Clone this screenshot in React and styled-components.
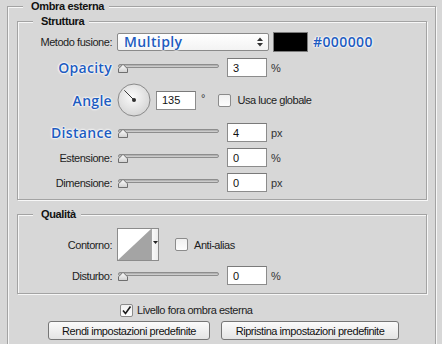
import React from 'react';
import styled, { createGlobalStyle, css } from 'styled-components';

const BG = '#d7d7d7';

const Global = createGlobalStyle`
  html, body { margin: 0; padding: 0; background: ${BG}; overflow: hidden; }
  body {
    font-family: "Liberation Sans", Arial, sans-serif;
    font-size: 11px;
    color: #1d1d1d;
  }
  #root { width: 442px; height: 344px; overflow: hidden; }
`;

const Page = styled.div`
  box-sizing: border-box;
  width: 442px;
  height: 344px;
  padding: 6px 0 0 7px;
`;

const Group = styled.div`
  box-sizing: border-box;
  width: ${p => p.$w}px;
  margin-top: ${p => p.$mt || 0}px;
  border: 1px solid #a3a3a3;
  box-shadow: inset 1px 1px 0 #f7f7f7, 1px 1px 0 #f7f7f7;
  padding-bottom: ${p => p.$pb || 0}px;
`;

const Title = styled.div`
  width: fit-content;
  margin: -7px 0 0 15px;
  padding: 0 5px 0 8px;
  background: ${BG};
  font-weight: bold;
  font-size: 11px;
  line-height: 13px;
  letter-spacing: -0.35px;
  color: #111;
`;

const Body = styled.div`
  padding: ${p => p.$pad};
  display: flex;
  flex-direction: column;
  gap: ${p => p.$gap || 0}px;
`;

const Row = styled.div`
  display: flex;
  align-items: center;
  height: ${p => p.$h || 19}px;
  flex: none;
`;

const Label = styled.div`
  width: 94px;
  flex: none;
  margin-right: 5px;
  text-align: right;
  white-space: nowrap;
  ${p => p.$blue ? css`
    font-family: "Open Sans", "Liberation Sans", sans-serif;
    font-size: 14px;
    font-weight: 600;
    color: #1e5cc0;
    letter-spacing: 0.3px;
    text-shadow: 0 0 1px #fff, 0 0 2px #fff, 0 0 2px #fff, 0 0 3px #fff;
  ` : css`
    font-size: 11px;
    letter-spacing: -0.45px;
    color: #1d1d1d;
  `}
`;

const Text = styled.span`
  font-size: 11px;
  letter-spacing: -0.45px;
  white-space: nowrap;
  color: #1d1d1d;
  margin-left: ${p => p.$ml || 0}px;
`;

const Unit = styled.span`
  margin-left: 4px;
  font-size: 11px;
  color: #333;
  letter-spacing: -0.2px;
`;

const Field = styled.input`
  box-sizing: border-box;
  width: 40px;
  height: 19px;
  margin: 0 0 0 ${p => p.$ml ?? 8}px;
  padding: 0 0 0 5px;
  border: 1px solid #8c8c8c;
  border-top-color: #7a7a7a;
  background: #fff;
  font-family: "Liberation Sans", Arial, sans-serif;
  font-size: 11px;
  color: #111;
  outline: none;
  flex: none;
`;

const Select = styled.div`
  box-sizing: border-box;
  width: 152px;
  height: 18px;
  border: 1px solid #8a8a8a;
  border-radius: 2px;
  background: linear-gradient(#ffffff, #f3f3f3);
  display: flex;
  align-items: center;
  justify-content: space-between;
  padding: 0 5px 0 6px;
  flex: none;
`;

const Blue = styled.span`
  font-family: "Open Sans", "Liberation Sans", sans-serif;
  font-size: 14px;
  font-weight: 600;
  color: #1e5cc0;
  letter-spacing: ${p => p.$ls ?? 0.3}px;
  margin-left: ${p => p.$ml || 0}px;
  text-shadow: 0 0 1px #fff, 0 0 2px #fff, 0 0 2px #fff, 0 0 3px #fff;
  line-height: 18px;
`;

const Swatch = styled.div`
  box-sizing: border-box;
  width: 35px;
  height: 20px;
  margin-left: 4px;
  background: #000;
  border: 1px solid #7c7c7c;
  flex: none;
`;

const SliderBox = styled.div`
  position: relative;
  width: 101px;
  height: 10px;
  margin-left: 1px;
  flex: none;
`;

const Track = styled.div`
  box-sizing: border-box;
  margin-top: 1px;
  height: 4px;
  border-radius: 2px;
  border: 1px solid #8d8d8d;
  background: linear-gradient(#a6a6a6, #d8d8d8);
`;

const Thumb = styled.svg`
  position: absolute;
  left: 0;
  top: 0;
`;

const Box = styled.div`
  box-sizing: border-box;
  width: 13px;
  height: 13px;
  margin-left: ${p => p.$ml || 0}px;
  border: 1px solid #8b8b8b;
  border-radius: 2px;
  background: linear-gradient(#f0f0f0, #fdfdfd);
  flex: none;
  display: flex;
  align-items: center;
  justify-content: center;
`;

const Degree = styled.span`
  margin-left: 5px;
  align-self: flex-start;
  margin-top: 9px;
  font-size: 11px;
  color: #333;
`;

const Contour = styled.div`
  box-sizing: border-box;
  display: flex;
  height: 33px;
  border: 1px solid #8c8c8c;
  background: #fff;
  flex: none;
`;

const Drop = styled.div`
  width: 6px;
  border-left: 1px solid #a8a8a8;
  display: flex;
  align-items: center;
  justify-content: center;
  padding-bottom: 4px;
  background: linear-gradient(90deg, #fafafa, #ececec);
`;

const Line = styled.div`
  display: flex;
  align-items: center;
  height: ${p => p.$h}px;
  margin-top: ${p => p.$mt}px;
  padding-left: ${p => p.$pl}px;
  gap: ${p => p.$gap || 0}px;
`;

const Button = styled.div`
  box-sizing: border-box;
  width: ${p => p.$w}px;
  height: 19px;
  border: 1px solid #767676;
  border-radius: 3px;
  background: linear-gradient(#fbfbfb, #e4e4e4);
  display: flex;
  align-items: center;
  justify-content: center;
  font-size: 11px;
  letter-spacing: -0.45px;
  color: #111;
  flex: none;
`;

function Slider() {
  return (
    <SliderBox>
      <Track />
      <Thumb width="10" height="10" viewBox="0 0 10 10">
        <defs>
          <linearGradient id="tg" x1="0" y1="0" x2="0" y2="1">
            <stop offset="0" stopColor="#ffffff" />
            <stop offset="1" stopColor="#cfcfcf" />
          </linearGradient>
        </defs>
        <path d="M0.5 9.5 V5.8 L5 1.3 L9.5 5.8 V9.5 Z" fill="url(#tg)" stroke="#6e6e6e" strokeWidth="1" strokeLinejoin="round" />
      </Thumb>
    </SliderBox>
  );
}

function Check({ checked, ml }) {
  return (
    <Box $ml={ml}>
      {checked && (
        <svg width="11" height="11" viewBox="0 0 11 11">
          <path d="M2 5.5 L4.5 8.5 L9.5 1.5" fill="none" stroke="#1a1a1a" strokeWidth="1.6" />
        </svg>
      )}
    </Box>
  );
}

function Dial() {
  return (
    <svg width="34" height="34" viewBox="0 0 34 34" style={{ flex: 'none' }}>
      <defs>
        <radialGradient id="dg" cx="45%" cy="40%" r="65%">
          <stop offset="0" stopColor="#fbfbfb" />
          <stop offset="1" stopColor="#d2d2d2" />
        </radialGradient>
      </defs>
      <circle cx="17" cy="17" r="16" fill="url(#dg)" stroke="#8a8a8a" />
      <line x1="17" y1="17" x2="7.3" y2="7.3" stroke="#3a3a3a" strokeWidth="1" />
      <circle cx="17" cy="17" r="2" fill="#2e2e2e" />
    </svg>
  );
}

export default function App() {
  return (
    <>
      <Global />
      <Page>
        <Group $w={429} $pb={30}>
          <Title>Ombra esterna</Title>
          <Body $pad="8px 8px 0 9px">
            <Group $w={410} $pb={7}>
              <Title>Struttura</Title>
              <Body $pad="4px 0 0 0" $gap={6}>
                <Row $h={20}>
                  <Label>Metodo fusione:</Label>
                  <Select>
                    <Blue $ls={0.4}>Multiply</Blue>
                    <svg width="6" height="10" viewBox="0 0 6 10">
                      <path d="M0 4 L3 0.5 L6 4 Z M0 6 L3 9.5 L6 6 Z" fill="#333" />
                    </svg>
                  </Select>
                  <Swatch />
                  <Blue $ml={5} $ls={0.4}>#000000</Blue>
                </Row>
                <Row>
                  <Label $blue>Opacity</Label>
                  <Slider />
                  <Field readOnly value="3" />
                  <Unit>%</Unit>
                </Row>
                <Row $h={34}>
                  <Label $blue>Angle</Label>
                  <Dial />
                  <Field readOnly value="135" $ml={5} />
                  <Degree>°</Degree>
                  <Check ml={13} />
                  <Text $ml={6}>Usa luce globale</Text>
                </Row>
                <Row>
                  <Label $blue>Distance</Label>
                  <Slider />
                  <Field readOnly value="4" />
                  <Unit>px</Unit>
                </Row>
                <Row>
                  <Label>Estensione:</Label>
                  <Slider />
                  <Field readOnly value="0" />
                  <Unit>%</Unit>
                </Row>
                <Row>
                  <Label>Dimensione:</Label>
                  <Slider />
                  <Field readOnly value="0" />
                  <Unit>px</Unit>
                </Row>
              </Body>
            </Group>
            <Group $w={410} $pb={8} $mt={14}>
              <Title>Qualità</Title>
              <Body $pad="7px 0 0 0" $gap={5}>
                <Row $h={33}>
                  <Label>Contorno:</Label>
                  <Contour>
                    <svg width="33" height="31" viewBox="0 0 33 31">
                      <rect width="33" height="31" fill="#fff" />
                      <path d="M0 31 L33 0 L33 31 Z" fill="#a4a4a4" />
                    </svg>
                    <Drop>
                      <svg width="5" height="3" viewBox="0 0 5 3">
                        <path d="M0 0 H5 L2.5 3 Z" fill="#222" />
                      </svg>
                    </Drop>
                  </Contour>
                  <Check ml={16} />
                  <Text $ml={6}>Anti-alias</Text>
                </Row>
                <Row>
                  <Label>Disturbo:</Label>
                  <Slider />
                  <Field readOnly value="0" />
                  <Unit>%</Unit>
                </Row>
              </Body>
            </Group>
            <Line $h={14} $mt={9} $pl={103}>
              <Check checked />
              <Text $ml={4}>Livello fora ombra esterna</Text>
            </Line>
            <Line $h={19} $mt={4} $pl={31} $gap={11}>
              <Button $w={162}>Rendi impostazioni predefinite</Button>
              <Button $w={178}>Ripristina impostazioni predefinite</Button>
            </Line>
          </Body>
        </Group>
      </Page>
    </>
  );
}
